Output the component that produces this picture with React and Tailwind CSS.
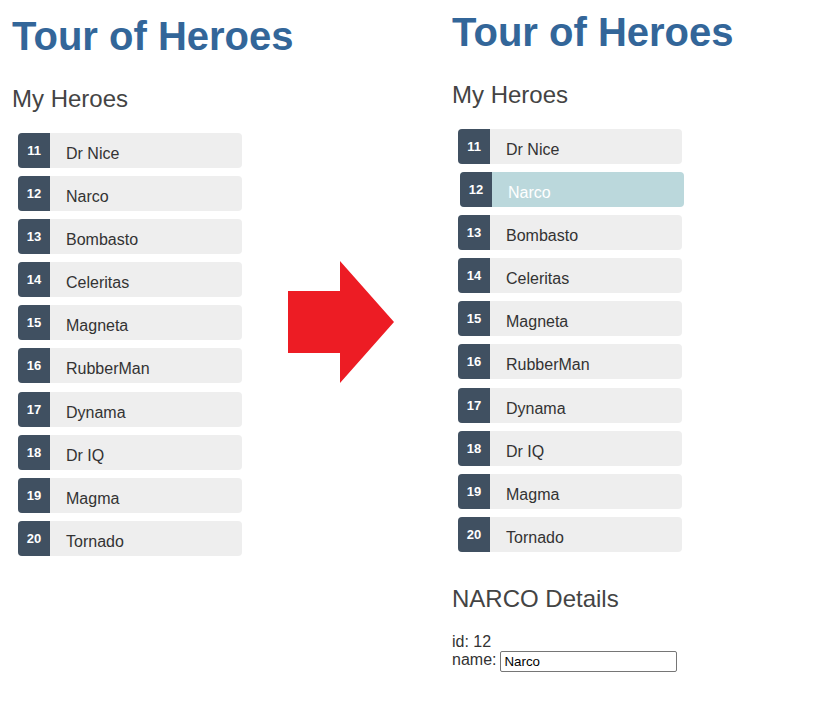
import React from "react";

const heroes = [
  [11, "Dr Nice"],
  [12, "Narco"],
  [13, "Bombasto"],
  [14, "Celeritas"],
  [15, "Magneta"],
  [16, "RubberMan"],
  [17, "Dynama"],
  [18, "Dr IQ"],
  [19, "Magma"],
  [20, "Tornado"],
];

function HeroList({ selected }) {
  return (
    <ul className="mt-[20px] flex flex-col gap-[8.1px]">
      {heroes.map(([id, name]) => {
        const sel = id === selected;
        return (
          <li
            key={id}
            className={
              "flex h-[35px] w-[224px] rounded-[4px] " +
              (sel ? "ml-[8px] bg-[#BBD8DC] text-white" : "ml-[6px] bg-[#EEEEEE] text-[#333333]")
            }
          >
            <span className="flex w-[32px] items-center justify-center rounded-l-[4px] bg-[#405061] text-[13px] font-bold leading-[15px] text-white">
              {id}
            </span>
            <span className="ml-[16px] pt-[12px] text-[16px] leading-[18px]">{name}</span>
          </li>
        );
      })}
    </ul>
  );
}

function Column({ selected, offset }) {
  return (
    <div className={offset}>
      <h1 className="whitespace-nowrap text-[40px] font-bold leading-[46px] text-[#336699]">Tour of Heroes</h1>
      <h2 className="mt-[26px] text-[24px] font-normal leading-[28px] text-[#444444]">My Heroes</h2>
      <HeroList selected={selected} />
      {selected && (
        <div className="text-[#333333]">
          <h2 className="mt-[33px] text-[24px] font-normal leading-[28px] text-[#444444]">NARCO Details</h2>
          <div className="mt-[20px] text-[16px] leading-[18px]">id: 12</div>
          <div className="flex items-start text-[16px] leading-[18px]">
            <span>name:</span>
            <input
              readOnly
              value="Narco"
              className="ml-[4px] h-[21px] w-[177px] rounded-[2px] border border-[#767676] px-[3px] text-[13.33px] text-black outline-none"
              style={{ fontFamily: '"Liberation Sans", Arial, sans-serif' }}
            />
          </div>
        </div>
      )}
    </div>
  );
}

export default function App() {
  return (
    <div
      className="flex min-h-[711px] w-[815px] bg-white"
      style={{ fontFamily: '"Liberation Sans", Arial, Helvetica, sans-serif' }}
    >
      <div className="w-[288px] shrink-0 pl-[12px]">
        <Column offset="pt-[13px]" />
      </div>
      <svg
        className="mt-[261px] shrink-0"
        width="106"
        height="122"
        viewBox="0 0 106 122"
      >
        <polygon points="0,30 52,30 52,0 106,61 52,122 52,92 0,92" fill="#ED1C24" />
      </svg>
      <div className="ml-[58px]">
        <Column offset="pt-[9px]" selected={12} />
      </div>
    </div>
  );
}
